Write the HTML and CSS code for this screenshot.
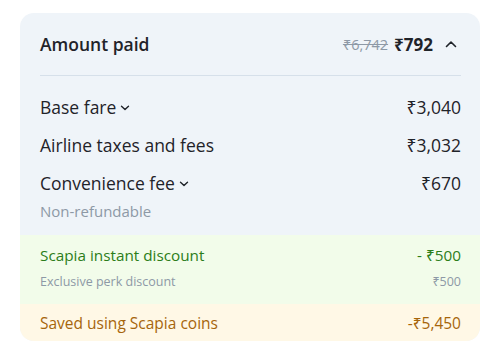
FILE: index.html
```html
<!DOCTYPE html>
<html>
<head>
<meta charset="utf-8">
<link rel="stylesheet" href="styles.css">
</head>
<body>
<div class="card">
  <div class="main">
    <div class="header">
      <span class="title">Amount paid</span>
      <span class="header-right">
        <span class="old">₹6,742</span>
        <span class="paid">₹792</span>
        <svg class="chev-up" width="12" height="8" viewBox="0 0 12 8"><path d="M1.5 6.5 L6 2 L10.5 6.5" fill="none" stroke="#1f2329" stroke-width="1.6" stroke-linecap="round" stroke-linejoin="round"/></svg>
      </span>
    </div>
    <div class="divider"></div>
    <div class="row first">
      <span class="label">Base fare <svg class="chev" width="10" height="6" viewBox="0 0 10 6"><path d="M1.5 1.2 L5 4.6 L8.5 1.2" fill="none" stroke="#1f2329" stroke-width="1.4" stroke-linecap="round" stroke-linejoin="round"/></svg></span>
      <span class="amount">₹3,040</span>
    </div>
    <div class="row">
      <span class="label">Airline taxes and fees</span>
      <span class="amount">₹3,032</span>
    </div>
    <div class="row">
      <span class="label">Convenience fee <svg class="chev" width="10" height="6" viewBox="0 0 10 6"><path d="M1.5 1.2 L5 4.6 L8.5 1.2" fill="none" stroke="#1f2329" stroke-width="1.4" stroke-linecap="round" stroke-linejoin="round"/></svg></span>
      <span class="amount">₹670</span>
    </div>
    <div class="note">Non-refundable</div>
  </div>
  <div class="discount">
    <div class="row-sm green">
      <span>Scapia instant discount</span>
      <span>- ₹500</span>
    </div>
    <div class="row-xs">
      <span>Exclusive perk discount</span>
      <span>₹500</span>
    </div>
  </div>
  <div class="coins">
    <span>Saved using Scapia coins</span>
    <span>-₹5,450</span>
  </div>
</div>
</body>
</html>
```
FILE: styles.css
```css
* { box-sizing: border-box; }
html, body { margin: 0; padding: 0; background: #ffffff; }
body {
  font-family: "Open Sans", "Noto Sans", "DejaVu Sans", sans-serif;
  color: #1f2329;
  padding: 13px 20px 0 20px;
}
.card {
  width: 460px;
  background: #eff4f9;
  border-radius: 14px;
  overflow: hidden;
}
.main { padding: 0 19px 14px 20px; }
.header {
  height: 62px;
  display: flex;
  align-items: center;
  justify-content: space-between;
}
.title { font-size: 17.5px; font-weight: 600; }
.header-right { display: flex; align-items: center; }
.old {
  font-size: 14.5px;
  color: #8d99a6;
  text-decoration: line-through;
  margin-right: 6px;
}
.paid { font-size: 17px; font-weight: 700; }
.chev-up { margin-left: 12px; margin-right: 4px; }
.divider { height: 1px; background: #d6e0ea; }
.row {
  display: flex;
  justify-content: space-between;
  align-items: center;
  height: 38px;
  font-size: 17.5px;
}
.row.first { margin-top: 12px; }
.label { display: flex; align-items: center; }
.chev { margin-left: 4px; margin-top: 1px; }
.note { font-size: 15px; color: #8d99a6; margin-top: -1px; }
.discount {
  background: #f2fcea;
  padding: 8px 19px 11px 20px;
}
.row-sm {
  display: flex;
  justify-content: space-between;
  align-items: center;
  height: 23px;
  font-size: 15.3px;
}
.green { color: #2c7d19; }
.row-xs {
  display: flex;
  justify-content: space-between;
  align-items: center;
  height: 24px;
  margin-top: 3px;
  font-size: 12.5px;
  color: #8d99a6;
}
.coins {
  background: #fff8e6;
  display: flex;
  justify-content: space-between;
  align-items: center;
  height: 37px;
  padding: 0 19px 0 20px;
  font-size: 15.5px;
  color: #a6650b;
}
```
